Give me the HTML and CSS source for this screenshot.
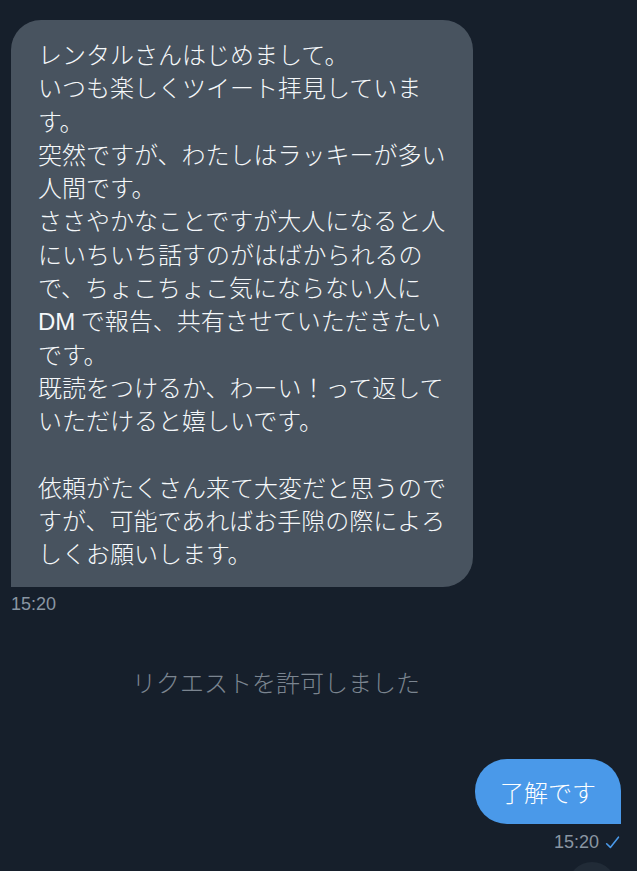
FILE: index.html
```html
<!DOCTYPE html>
<html lang="ja">
<head>
<meta charset="utf-8">
<link rel="stylesheet" href="styles.css">
</head>
<body>
<main class="chat">
  <div class="msg msg-in">
    <div class="bubble bubble-in">レンタルさんはじめまして。<br>いつも楽しくツイート拝見していま<br>す。<br>突然ですが、わたしはラッキーが多い<br>人間です。<br>ささやかなことですが大人になると人<br>にいちいち話すのがはばかられるの<br>で、ちょこちょこ気にならない人に<br><span class="latin">DM</span> で報告、共有させていただきたい<br>です。<br>既読をつけるか、わーい！って返して<br>いただけると嬉しいです。<br><br>依頼がたくさん来て大変だと思うので<br>すが、可能であればお手隙の際によろ<br>しくお願いします。</div>
    <div class="time">15:20</div>
  </div>
  <div class="system">リクエストを許可しました</div>
  <div class="msg msg-out">
    <div class="bubble bubble-out">了解です</div>
    <div class="time time-out">15:20 <svg class="check" viewBox="0 0 16 16" width="17" height="17"><path d="M2.5 9.2 L6 12.6 L13.6 3" fill="none" stroke="#4a99e9" stroke-width="1.5" stroke-linecap="round" stroke-linejoin="round"/></svg></div>
  </div>
  <div class="fab"></div>
</main>
</body>
</html>
```
FILE: styles.css
```css
html, body {
  margin: 0;
  padding: 0;
  background: #161f2b;
  height: 100%;
  overflow: hidden;
}
.chat {
  position: relative;
  height: 871px;
  padding: 20px 16px 0 11px;
  box-sizing: border-box;
  font-family: "Noto Sans CJK JP", "Noto Sans", sans-serif;
  font-weight: 300;
  color: #f5f8fa;
}
.msg {
  display: flex;
  flex-direction: column;
}
.msg-in { align-items: flex-start; }
.msg-out { align-items: flex-end; margin-top: 62px; }
.bubble {
  font-size: 24px;
  line-height: 33.3px;
  white-space: nowrap;
}
.latin {
  font-family: "Liberation Sans", Arial, sans-serif;
  font-weight: 400;
  line-height: 1;
}
.bubble-in {
  width: 462px;
  box-sizing: border-box;
  padding: 17px 20px 17px 27px;
  background: #48535f;
  border-radius: 30px 30px 30px 0;
}
.bubble-out {
  background: #4a99e9;
  padding: 16px 25px 16px 25px;
  border-radius: 32px 32px 0 32px;
  color: #ffffff;
}
.time {
  font-family: "Liberation Sans", Arial, sans-serif;
  font-weight: 400;
  font-size: 18px;
  color: #8a96a2;
  margin-top: 7px;
  line-height: 20px;
}
.time-out {
  display: flex;
  align-items: center;
  gap: 5px;
  margin-top: 8px;
}
.check { display: block; }
.system {
  margin-top: 53px;
  padding-right: 80px;
  text-align: center;
  font-size: 24px;
  line-height: 30px;
  color: #7b8590;
}
.fab {
  position: absolute;
  left: 568px;
  top: 862px;
  width: 48px;
  height: 48px;
  border-radius: 50%;
  background: #212b37;
}
```
